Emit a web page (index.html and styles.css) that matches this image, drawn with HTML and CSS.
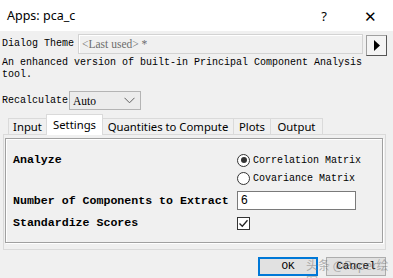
FILE: index.html
```html
<!DOCTYPE html>
<html lang="en">
<head>
  <meta charset="UTF-8">
  <title>Apps: pca_c</title>
  <link rel="stylesheet" href="styles.css">
</head>
<body>
  <div class="titlebar">
    <span class="title">Apps: pca_c</span>
    <span class="tb-btn">?</span>
    <span class="tb-btn close">&#x2715;</span>
  </div>

  <div class="theme-row">
    <span class="theme-label">Dialog Theme</span>
    <div class="theme-field">&lt;Last used&gt; *</div>
    <div class="theme-btn">
      <svg width="8" height="11" viewBox="0 0 8 11"><path d="M1 0 L7 5.5 L1 11 Z" fill="#000"/></svg>
    </div>
  </div>

  <p class="desc">An enhanced version of built-in Principal Component Analysis<br>tool.</p>

  <div class="recalc-row">
    <span class="recalc-label">Recalculate</span>
    <div class="select">
      <span>Auto</span>
      <svg width="11" height="7" viewBox="0 0 11 7"><path d="M0.5 0.8 L5.5 5.8 L10.5 0.8" fill="none" stroke="#606060" stroke-width="1"/></svg>
    </div>
  </div>

  <div class="tabs">
    <span class="tab t-input">Input</span>
    <span class="tab t-settings active">Settings</span>
    <span class="tab t-quant">Quantities to Compute</span>
    <span class="tab t-plots">Plots</span>
    <span class="tab t-output">Output</span>
  </div>

  <div class="panel">
    <div class="group">
      <div class="field-label">Analyze</div>
      <div class="radios">
        <div class="opt"><span class="radio on"></span>Correlation Matrix</div>
        <div class="opt"><span class="radio"></span>Covariance Matrix</div>
      </div>

      <div class="field-label mid">Number of Components to Extract</div>
      <div class="num-input">6</div>

      <div class="field-label mid">Standardize Scores</div>
      <div class="check-cell">
        <span class="checkbox">
          <svg width="11" height="11" viewBox="0 0 11 11"><path d="M1.5 5.5 L4.3 8.3 L9.5 2.3" fill="none" stroke="#222" stroke-width="1.3"/></svg>
        </span>
      </div>
    </div>
  </div>

  <div class="buttons">
    <span class="btn default">OK</span>
    <span class="btn">Cancel</span>
    <span class="watermark">头条 @Paper绘图</span>
  </div>
</body>
</html>
```

FILE: styles.css
```css
/* base page */
body {
  margin: 0;
  width: 393px;
  height: 278px;
  overflow: hidden;
  background-color: #f0f0f0;
  font-family: "Liberation Mono", "DejaVu Sans Mono", monospace;
  font-size: 10px;
  color: #000;
  position: relative;
}

/* window title bar */
.titlebar {
  height: 31px;
  background-color: #fff;
  display: flex;
  align-items: center;
  padding-left: 7px;
  font-family: "Noto Sans", "Liberation Sans", sans-serif;
  font-size: 12.5px;
}

.title {
  flex: 1;
}

.tb-btn {
  width: 46px;
  text-align: center;
  font-size: 13px;
}

.tb-btn.close {
  font-size: 15px;
  font-weight: 300;
}

/* dialog theme row */
.theme-row {
  display: flex;
  align-items: center;
  margin-top: 2px;
  padding-left: 2px;
  height: 21px;
}

.theme-label {
  width: 76px;
}

.theme-field {
  width: 280px;
  height: 18px;
  line-height: 18px;
  border: 1px solid #d3d3d3;
  box-shadow: inset 1px 1px 0 #fff;
  padding-left: 3px;
  font-family: "Liberation Serif", serif;
  font-size: 11.5px;
  color: #6d6d6d;
}

.theme-btn {
  width: 19px;
  height: 19px;
  margin-left: 3px;
  margin-top: 3px;
  border: 1px solid #a0a0a0;
  border-right-color: #555;
  border-bottom-color: #555;
  background-color: #f4f4f4;
  display: flex;
  align-items: center;
  justify-content: center;
}

/* description */
.desc {
  margin: 3px 0 0 2px;
  line-height: 12px;
}

/* recalculate row */
.recalc-row {
  display: flex;
  align-items: center;
  margin-top: 10px;
  padding-left: 2px;
  height: 19px;
}

.recalc-label {
  width: 67px;
  overflow: hidden;
  white-space: nowrap;
}

.select {
  width: 62px;
  height: 17px;
  border: 1px solid #b4b4b4;
  background-color: #ececec;
  display: flex;
  align-items: center;
  justify-content: space-between;
  padding: 0 5px 0 3px;
  font-family: "Liberation Serif", serif;
  font-size: 11.5px;
}

/* tab strip */
.tabs {
  display: flex;
  align-items: flex-end;
  margin-top: 5px;
  padding-left: 8px;
  height: 19px;
  font-family: "Noto Sans", "Liberation Sans", sans-serif;
  font-size: 11.3px;
}

.tab {
  height: 15px;
  line-height: 15px;
  border: 1px solid #dadada;
  border-bottom: none;
  border-left: none;
  text-align: center;
  background-color: #f0f0f0;
}

.tab.active {
  height: 20px;
  line-height: 19px;
  background-color: #fff;
  border-left: 1px solid #dadada;
  margin-left: -1px;
  margin-bottom: -1px;
  position: relative;
  z-index: 1;
}

.t-input { width: 37px; border-left: 1px solid #dadada; }
.t-settings { width: 55px; }
.t-quant { width: 130px; }
.t-plots { width: 36px; }
.t-output { width: 51px; }

/* settings panel */
.panel {
  margin-left: 3px;
  width: 378px;
  height: 106px;
  border: 1px solid #dadada;
  padding: 3px 2px 5px 1px;
}

.group {
  height: 105px;
  box-sizing: border-box;
  border: 1px solid #a0a0a0;
  box-shadow: inset 1px 1px 0 #fff, 1px 1px 0 #fff;
  padding: 12px 0 0 7px;
  display: grid;
  grid-template-columns: 224px 1fr;
  grid-template-rows: 36px 19px 18px;
  row-gap: 4px;
  align-items: start;
}

.field-label {
  font-weight: bold;
  font-size: 11.6px;
  line-height: 18px;
}

.field-label.mid {
  align-self: center;
}

.opt {
  height: 18px;
  display: flex;
  align-items: center;
}

.radio {
  width: 11px;
  height: 11px;
  border: 1px solid #333;
  border-radius: 50%;
  background-color: #fff;
  margin-right: 3px;
  position: relative;
}

.radio.on::after {
  content: "";
  position: absolute;
  left: 2.5px;
  top: 2.5px;
  width: 6px;
  height: 6px;
  border-radius: 50%;
  background-color: #333;
}

.num-input {
  width: 114px;
  height: 17px;
  line-height: 17px;
  border: 1px solid #7a7a7a;
  background-color: #fff;
  padding-left: 3px;
  font-family: "Liberation Sans", sans-serif;
  font-size: 12px;
}

.check-cell {
  height: 18px;
  display: flex;
  align-items: center;
}

.checkbox {
  width: 11px;
  height: 11px;
  border: 1px solid #333;
  background-color: #fff;
  display: flex;
}

/* bottom buttons */
.buttons {
  display: flex;
  justify-content: flex-end;
  gap: 8px;
  margin-top: 7px;
  padding-right: 7px;
}

.btn {
  width: 58px;
  height: 17px;
  line-height: 17px;
  text-align: center;
  border: 1px solid #adadad;
  background-color: #e1e1e1;
  font-family: "Liberation Mono", monospace;
  font-size: 11px;
}

.btn.default {
  border: 2px solid #0078d7;
  width: 56px;
  height: 15px;
  line-height: 15px;
}

.watermark {
  position: absolute;
  left: 306px;
  top: 257px;
  font-family: "Noto Sans CJK SC", sans-serif;
  font-size: 12px;
  line-height: 16px;
  color: rgba(110, 110, 110, 0.5);
}
```
